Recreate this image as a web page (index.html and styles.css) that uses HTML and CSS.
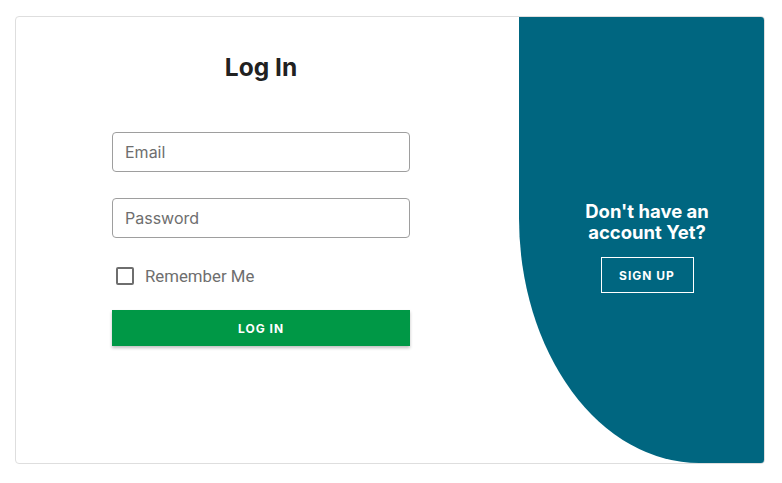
FILE: index.html
```html
<!DOCTYPE html>
<html>
<head>
<meta charset="utf-8">
<link rel="stylesheet" href="styles.css">
</head>
<body>
<div class="card">
  <div class="login">
    <h1 class="title">Log In</h1>
    <form class="form">
      <div class="field"><input type="text" placeholder="Email"></div>
      <div class="field"><input type="password" placeholder="Password"></div>
      <label class="remember"><span class="box"></span><span>Remember Me</span></label>
      <button type="button" class="btn-login">LOG IN</button>
    </form>
  </div>
  <div class="side">
    <div class="side-inner">
      <h2 class="side-title">Don't have an<br>account Yet?</h2>
      <button type="button" class="btn-signup">SIGN UP</button>
    </div>
  </div>
</div>
</body>
</html>
```

FILE: styles.css
```css
* { box-sizing: border-box; }
html, body { margin: 0; padding: 0; background: #fff; }
body { font-family: Inter, "Noto Sans", sans-serif; }

.card {
  width: 750px;
  height: 448px;
  margin: 16px 0 0 15px;
  border: 1px solid #dedede;
  border-radius: 4px;
  overflow: hidden;
  display: flex;
}

.login {
  width: 503px;
  padding: 35px 0 0 96px;
}

.title {
  margin: 0;
  width: 298px;
  text-align: center;
  font-size: 24.5px;
  font-weight: 700;
  line-height: 30px;
  color: #212121;
}

.form {
  width: 298px;
  margin-top: 50px;
  display: flex;
  flex-direction: column;
}

.field { margin-bottom: 26px; }
.field input {
  display: block;
  width: 100%;
  height: 40px;
  border: 1px solid #9e9e9e;
  border-radius: 4px;
  padding: 0 12px;
  font-family: Inter, sans-serif;
  font-size: 16px;
  color: #333;
  outline: none;
}
.field input::placeholder { color: #6e6e6e; }

.remember {
  display: flex;
  align-items: center;
  gap: 11px;
  height: 24px;
  padding-left: 4px;
  font-size: 16.8px;
  color: #6e6e6e;
  font-family: Roboto, Inter, sans-serif;
}
.box {
  width: 18px;
  height: 18px;
  border: 2px solid #6e6e6e;
  border-radius: 2px;
}

.btn-login {
  margin-top: 22px;
  height: 36px;
  border: none;
  border-radius: 0;
  background: #009846;
  color: #fff;
  font-family: Inter, sans-serif;
  font-weight: 700;
  font-size: 12px;
  letter-spacing: 1px;
  box-shadow: 0 2px 3px rgba(0,0,0,0.25);
}

.side {
  flex: 1;
  background: #006680;
  border-bottom-left-radius: 180px 245px;
  display: flex;
  align-items: center;
  justify-content: center;
  padding: 14px 0 0 11px;
}

.side-inner {
  display: flex;
  flex-direction: column;
  align-items: center;
}

.side-title {
  margin: 0;
  color: #fff;
  font-size: 18.5px;
  font-weight: 700;
  line-height: 21px;
  text-align: center;
}

.btn-signup {
  margin-top: 14px;
  width: 93px;
  height: 36px;
  background: transparent;
  border: 1px solid #fff;
  border-radius: 0;
  color: #fff;
  font-family: Inter, sans-serif;
  font-weight: 700;
  font-size: 12px;
  letter-spacing: 1px;
}
```
